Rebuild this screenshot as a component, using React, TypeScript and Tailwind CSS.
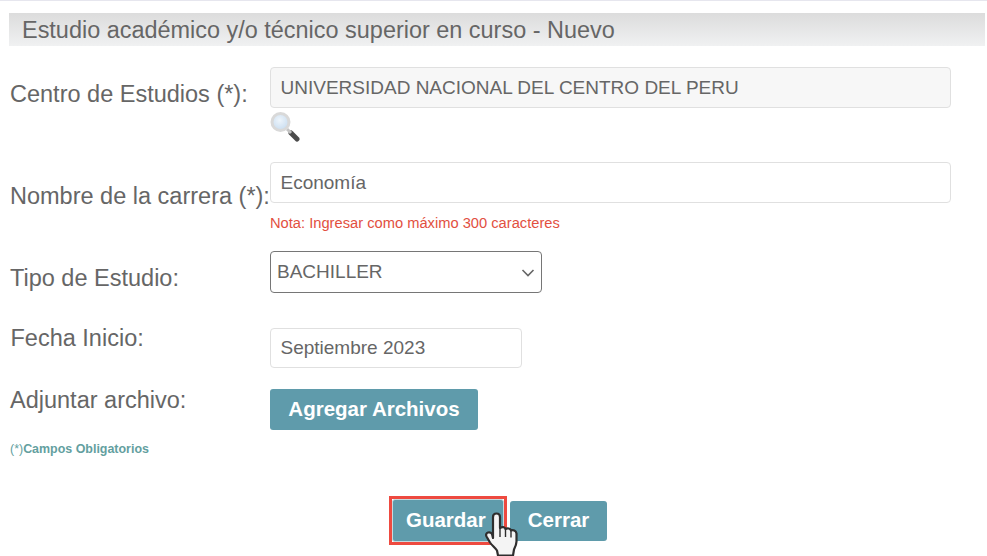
export default function App() {
  return (
    <div className="w-[987px] h-[556px] overflow-hidden bg-white border-t border-[#e6e6ee] font-['Liberation_Sans',Arial,sans-serif] text-[#666666]">
      <div className="ml-[9px] mr-[2px] mt-[12px] h-[33px] pl-[13px] bg-gradient-to-b from-[#dcdcdc] to-[#f0f1f2] text-[23.45px] leading-[35px] text-[#666666]">
        Estudio académico y/o técnico superior en curso - Nuevo
      </div>

      <div className="mt-[21px] flex">
        <div className="w-[270px] shrink-0 pl-[10px] pt-[13px] text-[23.5px] leading-[28px]">Centro de Estudios (*):</div>
        <div>
          <div className="w-[681px] h-[41px] pl-[10px] -indent-[0.5px] bg-[#f7f7f7] border border-[#e0e0e0] rounded-[4px] text-[19px] leading-[39px]">
            UNIVERSIDAD NACIONAL DEL CENTRO DEL PERU
          </div>
          <svg className="mt-[3px] blur-[0.4px]" width="31" height="31" viewBox="0 0 31 31">
            <defs>
              <radialGradient id="lens" cx="0.45" cy="0.4" r="0.65">
                <stop offset="0" stopColor="#eef5fb" />
                <stop offset="1" stopColor="#c6dbef" />
              </radialGradient>
            </defs>
            <line x1="21" y1="22" x2="27" y2="28" stroke="#4a4a4a" strokeWidth="5" strokeLinecap="round" />
            <line x1="17" y1="18" x2="21" y2="22" stroke="#c4c4c4" strokeWidth="3" />
            <circle cx="10.500" cy="11" r="8.500" fill="url(#lens)" stroke="#d9d9d9" strokeWidth="3" />
          </svg>
        </div>
      </div>

      <div className="mt-[20px] flex">
        <div className="w-[270px] shrink-0 pl-[10px] pt-[20px] text-[23.5px] leading-[28px] whitespace-nowrap">Nombre de la carrera (*):</div>
        <div>
          <div className="w-[681px] h-[41px] pl-[10px] -indent-[0.5px] bg-white border border-[#e0e0e0] rounded-[4px] text-[19px] leading-[39px]">Economía</div>
          <div className="mt-[12px] text-[14.700px] leading-[16px] text-[#e2503f]">Nota: Ingresar como máximo 300 caracteres</div>
        </div>
      </div>

      <div className="mt-[20px] flex">
        <div className="w-[270px] shrink-0 pl-[10px] pt-[13px] text-[23.5px] leading-[28px]">Tipo de Estudio:</div>
        <div className="w-[272px] h-[42px] pl-[6px] pr-[6px] pt-px flex items-center justify-between bg-white border border-[#767676] rounded-[4px] text-[19px]">
          <span>BACHILLER</span>
          <svg width="14" height="14" viewBox="0 0 14 14" fill="none" stroke="#666666" strokeWidth="1.600">
            <path d="M1.500 4 7 9.500 12.500 4" />
          </svg>
        </div>
      </div>

      <div className="mt-[35px] flex">
        <div className="w-[270px] shrink-0 pl-[10.5px] text-[23.5px] leading-[20px]">Fecha Inicio:</div>
        <div className="w-[252px] h-[40px] pl-[10px] -indent-[0.5px] bg-white border border-[#e0e0e0] rounded-[4px] text-[19px] leading-[38px]">Septiembre 2023</div>
      </div>

      <div className="mt-[21px] flex">
        <div className="w-[270px] shrink-0 pl-[10px] pt-px text-[23.5px] leading-[20px]">Adjuntar archivo:</div>
        <div className="w-[208px] h-[41px] bg-[#5f9bab] rounded-[3px] text-white font-bold text-[20.500px] leading-[39px] text-center">Agregar Archivos</div>
      </div>

      <div className="mt-[12px] pl-[10px] text-[12.450px] leading-[14px] font-bold text-[#639f9f]">
        <span className="font-normal">(*)</span>Campos Obligatorios
      </div>

      <div className="mt-[40px] ml-[389px] flex items-center gap-[3px]">
        <div className="relative border-[3px] border-[#ee4a40]">
          <div className="w-[112px] h-[43px] pl-[13px] bg-[#5f9bab] border border-[#c5dadf] rounded-[3px] text-white font-bold text-[20.500px] leading-[39px]">Guardar</div>
          <svg className="absolute left-[93px] top-[13px]" width="36" height="46" viewBox="0 0 36 46">
            <path
              d="M8 5c0-2 1.500-3.500 3.500-3.500s3.500 1.500 3.500 3.500v11c2-1.500 5-1 5.500 1c2-1.200 5-.5 5.500 1.500c2-1 5 0 5.500 3v8c0 3-1 5-2.500 8l-1 6H13l-1-5c-2-3-5-5-7-8l-3.500-6c-1-2 0-3.500 1.500-4c1.500-.5 3 0 4 1.500L8 26Z"
              fill="#f4f4f4"
              stroke="#2e2e2e"
              strokeWidth="2.200"
              strokeLinejoin="round"
            />
            <path d="M15 16v9M20.500 17v8M26 18.500v7" stroke="#2e2e2e" strokeWidth="1.400" />
          </svg>
        </div>
        <div className="w-[97px] h-[40px] bg-[#5f9bab] rounded-[3px] text-white font-bold text-[20.500px] leading-[38px] text-center">Cerrar</div>
      </div>
    </div>
  );
}
